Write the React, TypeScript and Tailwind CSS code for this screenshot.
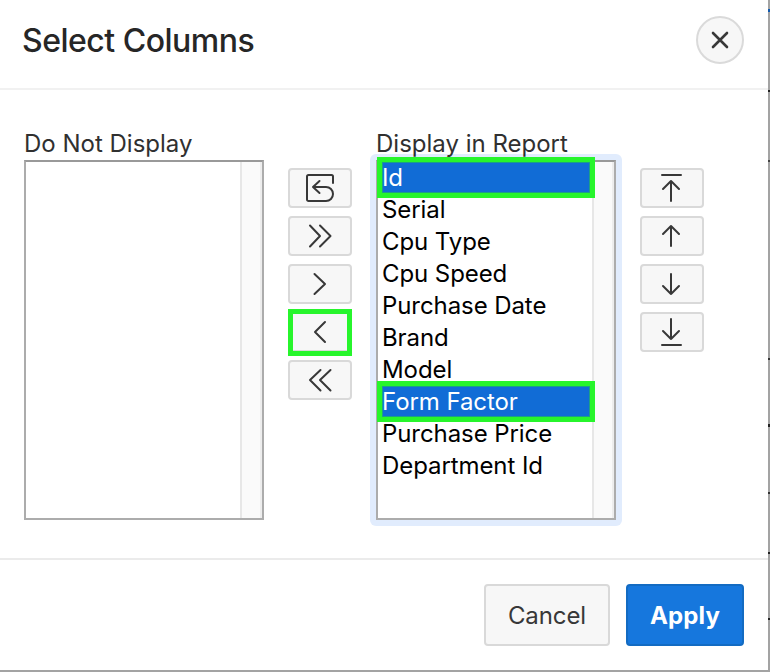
import type { ReactNode } from "react";

const columns = [
  "Id",
  "Serial",
  "Cpu Type",
  "Cpu Speed",
  "Purchase Date",
  "Brand",
  "Model",
  "Form Factor",
  "Purchase Price",
  "Department Id",
];
const selected = ["Id", "Form Factor"];

function Icon({ children }: { children: ReactNode }) {
  return (
    <svg
      width="60"
      height="36"
      viewBox="0 0 60 36"
      fill="none"
      stroke="#383838"
      strokeWidth="2"
      strokeLinecap="round"
      strokeLinejoin="round"
      className="shrink-0"
    >
      {children}
    </svg>
  );
}

function ToolButton({ label, marked, children }: { label: string; marked?: boolean; children: ReactNode }) {
  return (
    <button
      aria-label={label}
      className="relative flex h-10 w-16 items-center justify-center rounded-[4px] border-2 border-[#d9d9d9] bg-[#f7f7f7]"
    >
      <Icon>{children}</Icon>
      {marked && (
        <span className="absolute -left-[2px] -top-[5px] h-[47px] w-[64px] border-[5px] border-[#27f52c]" />
      )}
    </button>
  );
}

function ScrollTrack() {
  return <div className="w-[22px] shrink-0 border-x-2 border-l-[#e7e7e7] border-r-[#ededed] bg-[#fafafa]" />;
}

function Option({ name }: { name: string }) {
  const on = selected.includes(name);
  return (
    <li
      className={
        on
          ? "relative h-8 bg-[#116cd6] pl-[4px] text-white"
          : "relative h-8 pl-[4px] text-black"
      }
    >
      {name}
      {on && (
        <span className="absolute -left-[1px] -top-[5px] z-10 h-[41px] w-[218px] border-[5px] border-[#27f52c]">
          <span className="block h-full w-full border border-[#1c9f87]" />
        </span>
      )}
    </li>
  );
}

export default function App() {
  return (
    <div className="relative h-[672px] w-[770px] overflow-hidden bg-[#a3a3a3] font-['Inter','Liberation_Sans',sans-serif]">
      <div className="absolute right-0 top-0 h-full w-[2px]">
        <span className="absolute top-[9px] h-[3px] w-full bg-[#105ab0]" />
        <span className="absolute top-[90px] h-[2px] w-full bg-[#222]" />
        <span className="absolute top-[160px] h-[2px] w-full bg-[#444]" />
        <span className="absolute top-[358px] h-[2px] w-full bg-[#333]" />
        <span className="absolute top-[424px] h-[3px] w-full bg-[#222]" />
        <span className="absolute top-[492px] h-[2px] w-full bg-[#333]" />
        <span className="absolute top-[552px] h-[2px] w-full bg-[#222]" />
        <span className="absolute top-[618px] h-[2px] w-full bg-[#222]" />
      </div>

      <section className="relative flex h-[670px] w-[768px] flex-col bg-white">
        <header className="flex h-[90px] items-start justify-between border-b-2 border-[#f1f1f1] pl-[22px] pr-6 pt-4">
          <h1 className="whitespace-nowrap text-[32px] font-medium leading-[50px] tracking-[-0.5px] text-[#262626]">
            Select Columns
          </h1>
          <button
            aria-label="Close"
            className="flex h-12 w-12 items-center justify-center rounded-full border-2 border-[#dadada] bg-[#f7f7f7]"
          >
            <svg width="20" height="20" viewBox="0 0 20 20" stroke="#383838" strokeWidth="2.6" strokeLinecap="round">
              <path d="M3 3l14 14M17 3L3 17" />
            </svg>
          </button>
        </header>

        <main className="flex h-[468px] items-start gap-6 pl-6 pt-[38px] text-[24px]">
          <div className="w-[240px]">
            <div className="h-8 whitespace-nowrap leading-8 text-[#303030]">Do Not Display</div>
            <div className="flex h-[360px] justify-end border-2 border-[#acacac] border-t-[#999] bg-white">
              <ScrollTrack />
            </div>
          </div>

          <div className="flex w-16 flex-col gap-2 pt-10">
            <ToolButton label="Reset">
              <path d="M43 13V6.500a1.500 1.500 0 0 0-1.500-1.500H18.500a1.500 1.500 0 0 0-1.500 1.500V29.500a1.500 1.500 0 0 0 1.500 1.500H36a7 7 0 0 0 0-14H23M29.500 11L23 17L29.500 23" />
            </ToolButton>
            <ToolButton label="Move all">
              <path d="M20 7.500l10 10.500L20 28.500M30 7.500l10.500 10.500L30 28.500" />
            </ToolButton>
            <ToolButton label="Move">
              <path d="M24.500 8l10.500 10l-10.500 10" />
            </ToolButton>
            <ToolButton label="Remove" marked>
              <path d="M35 8l-10 10l10 10" />
            </ToolButton>
            <ToolButton label="Remove all">
              <path d="M30.500 8L20 18L30.500 28.500M40.500 8L30 18L40.500 28.500" />
            </ToolButton>
          </div>

          <div className="w-[240px]">
            <div className="relative z-10 h-8 whitespace-nowrap leading-8 text-[#303030]">Display in Report</div>
            <div className="-mx-[6px] -mt-[6px] rounded-[6px] bg-[#e1ecfd] p-[6px]">
              <div className="flex h-[360px] border-2 border-[#acacac] border-t-[#999] bg-white">
                <ul className="min-w-0 flex-1 whitespace-nowrap leading-8 tracking-[-0.08px]">
                  {columns.map((name) => (
                    <Option key={name} name={name} />
                  ))}
                </ul>
                <ScrollTrack />
              </div>
            </div>
          </div>

          <div className="flex w-16 flex-col gap-2 pt-10">
            <ToolButton label="Top">
              <path d="M20 5h19M29 31V12M21 19l8-8l8 8" />
            </ToolButton>
            <ToolButton label="Up">
              <path d="M29 28V9M21 16l8-8l8 8" />
            </ToolButton>
            <ToolButton label="Down">
              <path d="M29 8V28M21 20l8 8l8-8" />
            </ToolButton>
            <ToolButton label="Bottom">
              <path d="M20 31h19M29 5V25M21 17l8 8l8-8" />
            </ToolButton>
          </div>
        </main>

        <footer className="flex h-[112px] items-start justify-end gap-4 border-t-2 border-[#ebebeb] pr-6 pt-6 text-[24px]">
          <button className="h-[62px] w-[126px] rounded-[4px] border-2 border-[#d9d9d9] bg-[#f7f7f7] pt-[2px] tracking-[-0.1px] text-[#383838]">
            Cancel
          </button>
          <button className="h-[62px] w-[118px] rounded-[4px] border-2 border-[#136bc2] bg-[#1677dd] pt-[2px] font-bold tracking-[0.1px] text-white">
            Apply
          </button>
        </footer>
      </section>
    </div>
  );
}
